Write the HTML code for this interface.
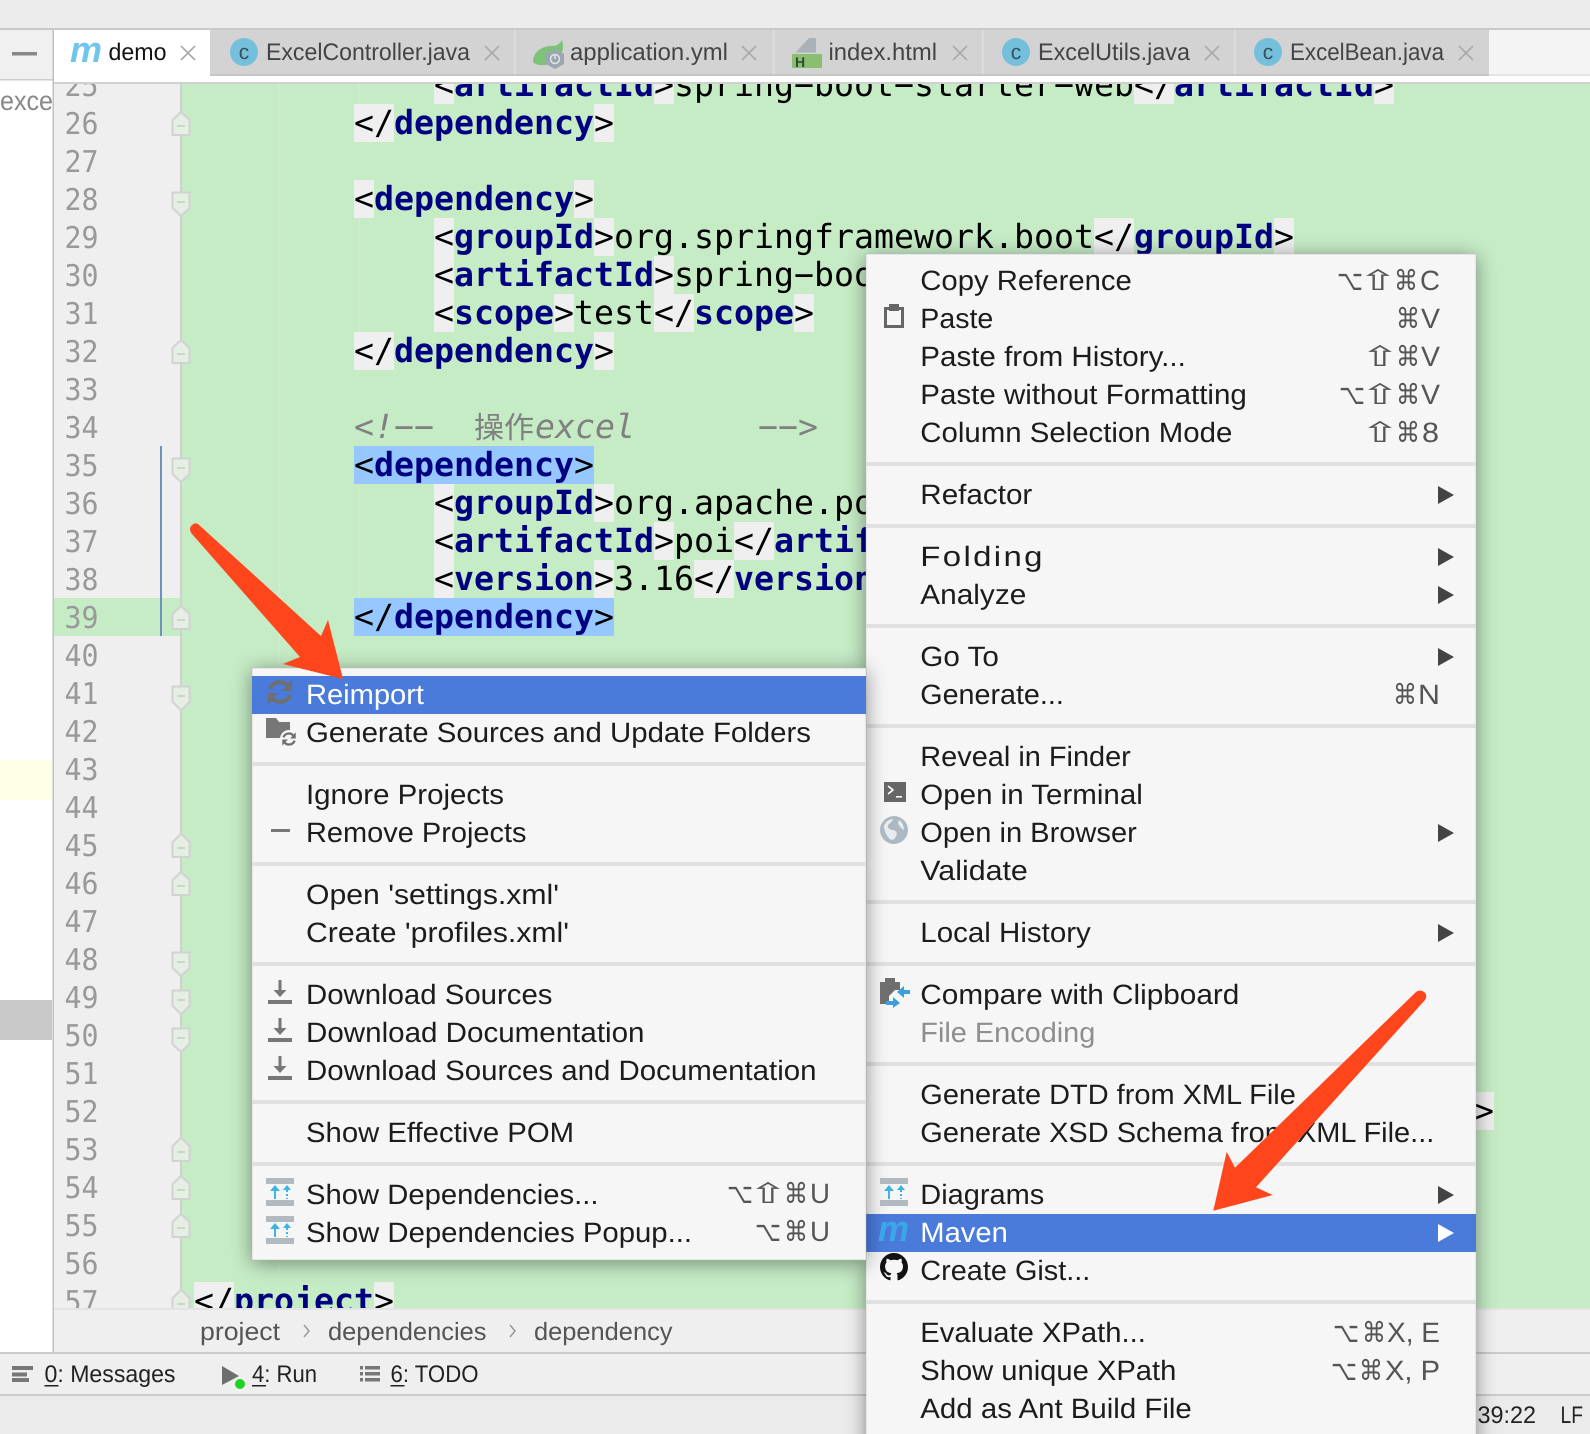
<!DOCTYPE html>
<html><head><meta charset="utf-8"><title>IDE</title>
<style>
html,body{margin:0;padding:0;background:#ececec}
svg{display:block}
text{text-rendering:geometricPrecision;white-space:pre}
.n{font:30px "DejaVu Sans Mono","Liberation Mono",monospace;fill:#999}
.c{font:33.22px "DejaVu Sans Mono","Liberation Mono",monospace;fill:#000}
.t{font-weight:bold;fill:#000080}
.k{font:italic 33.22px "DejaVu Sans Mono","Liberation Mono",monospace;fill:#808080}
.m{font:28px "Liberation Sans","DejaVu Sans",sans-serif;fill:#1c1c1c}
.s{font:28px "Liberation Sans","DejaVu Sans",sans-serif;fill:#555}
.w{fill:#fff}
.tb{font:24px "Liberation Sans",sans-serif;fill:#444}
.bc{font:25px "Liberation Sans",sans-serif;fill:#555}
.st{font:24px "Liberation Sans",sans-serif;fill:#222}
.x{stroke:#aaa;stroke-width:1.6;fill:none}
</style></head>
<body>
<svg xmlns="http://www.w3.org/2000/svg" width="1590" height="1434" viewBox="0 0 1590 1434">
<defs>
<clipPath id="ed"><rect x="54" y="84" width="1536" height="1224"/></clipPath>
<g id="fs"><path d="M172.500 12.500H189.500V28L181 36L172.500 28Z" fill="#e6efe4" stroke="#d2d2d2" stroke-width="2"/><rect x="177" y="21" width="8" height="2" fill="#d2d2d2"/></g>
<g id="fe"><path d="M181 8L189.500 16V31H172.500V16Z" fill="#e6efe4" stroke="#d2d2d2" stroke-width="2"/><rect x="177" y="21" width="8" height="2" fill="#d2d2d2"/></g>
<g id="rf"><path d="M-10-3A10.500 10.500 0 0 1 8-6M10 3A10.500 10.500 0 0 1-8 6" fill="none" stroke="#6f6f6f" stroke-width="4"/><path d="M12-12V-1H2ZM-12 12V1H-2Z" fill="#6f6f6f"/></g>
<g id="dp"><rect width="28" height="6" fill="#b0bac0"/><rect y="22" width="28" height="6" fill="#b0bac0"/><rect x="8" y="12" width="2" height="9" fill="#3cb4e4"/><path d="M9 7L4 13H14Z" fill="#3cb4e4"/><path d="M21 12V21" stroke="#3cb4e4" stroke-width="2" stroke-dasharray="2 2"/><path d="M21 7L17 12H25Z" fill="#3cb4e4"/></g>
<g id="dl"><rect x="-12" y="24" width="24" height="4" fill="#777"/><rect x="-1.500" y="4" width="3" height="11" fill="#777"/><path d="M-6.500 14H6.500L0 21Z" fill="#777"/></g>
</defs>

<!-- chrome -->
<rect width="1590" height="1434" fill="#ececec"/>
<rect y="28" width="1590" height="2" fill="#c9c9c9"/>
<rect x="0" y="30" width="53" height="49" fill="#f0f0f0"/>
<rect x="0" y="79" width="53" height="1.500" fill="#cdcdcd"/>
<rect x="0" y="80.500" width="53" height="1272" fill="#fff"/>
<rect x="12" y="52" width="25" height="3.500" fill="#888"/>
<rect x="0" y="760" width="52" height="40" fill="#ffffe6"/>
<rect x="0" y="1000" width="52" height="40" fill="#c9c9c9"/>
<text x="0" y="110" font-family="Liberation Sans" font-size="27" fill="#888" textLength="53" lengthAdjust="spacingAndGlyphs">exce</text>
<rect x="52.500" y="30" width="2" height="1323" fill="#c0c0c0"/>

<!-- tab strip -->
<rect x="54" y="30" width="1536" height="46" fill="#f4f4f4"/>
<rect x="210" y="30" width="1279" height="44" fill="#d3d3d3"/>
<rect x="210" y="74" width="1279" height="2" fill="#c6c6c6"/>
<rect x="1489" y="74" width="101" height="2" fill="#e4e4e4"/>
<rect x="54" y="30" width="156" height="46" fill="#fff"/>
<rect x="54" y="76" width="1536" height="6" fill="#fff"/>
<rect x="54" y="82" width="1536" height="2" fill="#d0d0d0"/>
<rect x="514" y="30" width="1.500" height="44" fill="#e0e0e0"/>
<rect x="773" y="30" width="1.500" height="44" fill="#e0e0e0"/>
<rect x="982" y="30" width="1.500" height="44" fill="#e0e0e0"/>
<rect x="1234" y="30" width="1.500" height="44" fill="#e0e0e0"/>

<text x="70" y="62" font-family="Liberation Sans" font-size="36" font-weight="bold" font-style="italic" fill="#6ec6ec" textLength="32" lengthAdjust="spacingAndGlyphs">m</text>
<text class="tb" x="108.500" y="60" style="fill:#111" textLength="58" lengthAdjust="spacingAndGlyphs">demo</text>
<path class="x" d="M181 46L195 60M195 46L181 60"/>

<circle cx="244" cy="52" r="14" fill="#73bfdc"/><text x="244" y="59" text-anchor="middle" font-family="Liberation Sans" font-size="21" fill="#3a4f5a">c</text>
<text class="tb" x="266" y="60" textLength="204" lengthAdjust="spacingAndGlyphs">ExcelController.java</text>
<path class="x" d="M485 46L499 60M499 46L485 60"/>

<path d="M533 62C533 50 545 45 555 46C558 45 561 42 562 40C565 50 561 60 552 63C545 66 537 66 533 62Z" fill="#7ec27a"/>
<path d="M555 49L564 54V64L555 69L546 64V54Z" fill="#9aa6b0"/><circle cx="555" cy="59" r="4.500" fill="none" stroke="#e4e4e4" stroke-width="1.500"/><rect x="554.300" y="54" width="1.500" height="5" fill="#e4e4e4"/>
<text class="tb" x="570" y="60" textLength="158" lengthAdjust="spacingAndGlyphs">application.yml</text>
<path class="x" d="M742 46L756 60M756 46L742 60"/>

<path d="M796 52L809 38H816V52.500H796Z" fill="#a9b2b8"/>
<rect x="792" y="54" width="30" height="14" fill="#8abf72"/>
<text x="795" y="67" font-family="Liberation Sans" font-size="14" font-weight="bold" fill="#2f4f2a">H</text>
<text class="tb" x="828.500" y="60" textLength="108.500" lengthAdjust="spacingAndGlyphs">index.html</text>
<path class="x" d="M953 46L967 60M967 46L953 60"/>

<circle cx="1016" cy="52" r="14" fill="#73bfdc"/><text x="1016" y="59" text-anchor="middle" font-family="Liberation Sans" font-size="21" fill="#3a4f5a">c</text>
<text class="tb" x="1038" y="60" textLength="152" lengthAdjust="spacingAndGlyphs">ExcelUtils.java</text>
<path class="x" d="M1205 46L1219 60M1219 46L1205 60"/>

<circle cx="1268" cy="52" r="14" fill="#73bfdc"/><text x="1268" y="59" text-anchor="middle" font-family="Liberation Sans" font-size="21" fill="#3a4f5a">c</text>
<text class="tb" x="1290" y="60" textLength="154" lengthAdjust="spacingAndGlyphs">ExcelBean.java</text>
<path class="x" d="M1459 46L1473 60M1473 46L1459 60"/>

<!-- editor -->
<g clip-path="url(#ed)">
<rect x="54" y="84" width="126" height="1224" fill="#efefef"/>
<rect x="182" y="84" width="1408" height="1224" fill="#c6ecc6"/>
<rect x="54" y="598" width="126" height="38" fill="#c6ecc6"/>
<rect x="180" y="84" width="2" height="1224" fill="#d0d0d0"/>
<rect x="160" y="446" width="2" height="190" fill="#6d92bb"/>
<rect x="278.500" y="84" width="1.500" height="1190" fill="#d8e6d6"/>
<rect x="358.500" y="84" width="1.500" height="20" fill="#d8e6d6"/>
<rect x="358.500" y="218" width="1.500" height="114" fill="#d8e6d6"/>
<rect x="358.500" y="484" width="1.500" height="114" fill="#d8e6d6"/>

<g class="n">
<text x="64.500" y="96" textLength="34" lengthAdjust="spacingAndGlyphs">25</text><text x="64.500" y="134" textLength="34" lengthAdjust="spacingAndGlyphs">26</text><text x="64.500" y="172" textLength="34" lengthAdjust="spacingAndGlyphs">27</text><text x="64.500" y="210" textLength="34" lengthAdjust="spacingAndGlyphs">28</text><text x="64.500" y="248" textLength="34" lengthAdjust="spacingAndGlyphs">29</text><text x="64.500" y="286" textLength="34" lengthAdjust="spacingAndGlyphs">30</text><text x="64.500" y="324" textLength="34" lengthAdjust="spacingAndGlyphs">31</text><text x="64.500" y="362" textLength="34" lengthAdjust="spacingAndGlyphs">32</text><text x="64.500" y="400" textLength="34" lengthAdjust="spacingAndGlyphs">33</text><text x="64.500" y="438" textLength="34" lengthAdjust="spacingAndGlyphs">34</text><text x="64.500" y="476" textLength="34" lengthAdjust="spacingAndGlyphs">35</text><text x="64.500" y="514" textLength="34" lengthAdjust="spacingAndGlyphs">36</text><text x="64.500" y="552" textLength="34" lengthAdjust="spacingAndGlyphs">37</text><text x="64.500" y="590" textLength="34" lengthAdjust="spacingAndGlyphs">38</text><text x="64.500" y="628" textLength="34" lengthAdjust="spacingAndGlyphs">39</text><text x="64.500" y="666" textLength="34" lengthAdjust="spacingAndGlyphs">40</text><text x="64.500" y="704" textLength="34" lengthAdjust="spacingAndGlyphs">41</text><text x="64.500" y="742" textLength="34" lengthAdjust="spacingAndGlyphs">42</text><text x="64.500" y="780" textLength="34" lengthAdjust="spacingAndGlyphs">43</text><text x="64.500" y="818" textLength="34" lengthAdjust="spacingAndGlyphs">44</text><text x="64.500" y="856" textLength="34" lengthAdjust="spacingAndGlyphs">45</text><text x="64.500" y="894" textLength="34" lengthAdjust="spacingAndGlyphs">46</text><text x="64.500" y="932" textLength="34" lengthAdjust="spacingAndGlyphs">47</text><text x="64.500" y="970" textLength="34" lengthAdjust="spacingAndGlyphs">48</text><text x="64.500" y="1008" textLength="34" lengthAdjust="spacingAndGlyphs">49</text><text x="64.500" y="1046" textLength="34" lengthAdjust="spacingAndGlyphs">50</text><text x="64.500" y="1084" textLength="34" lengthAdjust="spacingAndGlyphs">51</text><text x="64.500" y="1122" textLength="34" lengthAdjust="spacingAndGlyphs">52</text><text x="64.500" y="1160" textLength="34" lengthAdjust="spacingAndGlyphs">53</text><text x="64.500" y="1198" textLength="34" lengthAdjust="spacingAndGlyphs">54</text><text x="64.500" y="1236" textLength="34" lengthAdjust="spacingAndGlyphs">55</text><text x="64.500" y="1274" textLength="34" lengthAdjust="spacingAndGlyphs">56</text><text x="64.500" y="1312" textLength="34" lengthAdjust="spacingAndGlyphs">57</text>
</g>

<use href="#fe" y="104"/><use href="#fs" y="180"/><use href="#fe" y="332"/><use href="#fs" y="446"/><use href="#fe" y="598"/><use href="#fs" y="674"/><use href="#fe" y="826"/><use href="#fe" y="864"/><use href="#fs" y="940"/><use href="#fs" y="978"/><use href="#fs" y="1016"/><use href="#fe" y="1130"/><use href="#fe" y="1168"/><use href="#fe" y="1206"/><use href="#fe" y="1282"/>

<g fill="#efefef">
<rect x="434" y="66" width="20" height="38"/><rect x="654" y="66" width="20" height="38"/><rect x="1134" y="66" width="40" height="38"/><rect x="1374" y="66" width="20" height="38"/>
<rect x="354" y="104" width="40" height="38"/><rect x="594" y="104" width="20" height="38"/>
<rect x="354" y="180" width="20" height="38"/><rect x="574" y="180" width="20" height="38"/>
<rect x="434" y="218" width="20" height="38"/><rect x="594" y="218" width="20" height="38"/><rect x="1094" y="218" width="40" height="38"/><rect x="1274" y="218" width="20" height="38"/>
<rect x="434" y="256" width="20" height="38"/><rect x="654" y="256" width="20" height="38"/>
<rect x="434" y="294" width="20" height="38"/><rect x="554" y="294" width="20" height="38"/><rect x="654" y="294" width="40" height="38"/><rect x="794" y="294" width="20" height="38"/>
<rect x="354" y="332" width="40" height="38"/><rect x="594" y="332" width="20" height="38"/>
<rect x="434" y="484" width="20" height="38"/><rect x="594" y="484" width="20" height="38"/>
<rect x="434" y="522" width="20" height="38"/><rect x="654" y="522" width="20" height="38"/><rect x="734" y="522" width="40" height="38"/>
<rect x="434" y="560" width="20" height="38"/><rect x="594" y="560" width="20" height="38"/><rect x="694" y="560" width="40" height="38"/>
<rect x="1474" y="1092" width="20" height="38"/>
<rect x="194" y="1282" width="40" height="38"/><rect x="374" y="1282" width="20" height="38"/>
</g>
<rect x="354" y="446" width="240" height="38" fill="#96c8ff"/>
<rect x="354" y="598" width="260" height="38" fill="#96c8ff"/>

<g transform="translate(0,1)">
<text class="c" x="434" y="95">&lt;<tspan class="t">artifactId</tspan>&gt;spring−boot−starter−web&lt;/<tspan class="t">artifactId</tspan>&gt;</text>
<text class="c" x="354" y="133">&lt;/<tspan class="t">dependency</tspan>&gt;</text>
<text class="c" x="354" y="209">&lt;<tspan class="t">dependency</tspan>&gt;</text>
<text class="c" x="434" y="247">&lt;<tspan class="t">groupId</tspan>&gt;org.springframework.boot&lt;/<tspan class="t">groupId</tspan>&gt;</text>
<text class="c" x="434" y="285">&lt;<tspan class="t">artifactId</tspan>&gt;spring−boot−starter−test</text>
<text class="c" x="434" y="323">&lt;<tspan class="t">scope</tspan>&gt;test&lt;/<tspan class="t">scope</tspan>&gt;</text>
<text class="c" x="354" y="361">&lt;/<tspan class="t">dependency</tspan>&gt;</text>
<text class="k" x="354" y="437">&lt;!−−</text>
<text x="474" y="437" font-family="'Noto Sans CJK SC',sans-serif" font-size="30" fill="#808080">操作</text>
<text class="k" x="535" y="437">excel</text>
<text class="k" x="758" y="437">−−&gt;</text>
<text class="c" x="354" y="475">&lt;<tspan class="t">dependency</tspan>&gt;</text>
<text class="c" x="434" y="513">&lt;<tspan class="t">groupId</tspan>&gt;org.apache.poi</text>
<text class="c" x="434" y="551">&lt;<tspan class="t">artifactId</tspan>&gt;poi&lt;/<tspan class="t">artifactId</tspan>&gt;</text>
<text class="c" x="434" y="589">&lt;<tspan class="t">version</tspan>&gt;3.16&lt;/<tspan class="t">version</tspan>&gt;</text>
<text class="c" x="354" y="627">&lt;/<tspan class="t">dependency</tspan>&gt;</text>
<text class="c" x="1474" y="1121">&gt;</text>
<text class="c" x="194" y="1311">&lt;/<tspan class="t">project</tspan>&gt;</text>
</g>
</g>

<!-- bottom bars -->
<rect x="54" y="1308" width="1536" height="44" fill="#efefef"/>
<rect x="54" y="1308" width="1536" height="2" fill="#e4e4e4"/>
<rect x="0" y="1352" width="1590" height="2" fill="#cbcbcb"/>
<rect x="0" y="1354" width="1590" height="40" fill="#efefef"/>
<rect x="0" y="1394" width="1590" height="2" fill="#cbcbcb"/>
<rect x="0" y="1396" width="1590" height="38" fill="#ebebeb"/>

<text class="bc" x="200" y="1340" textLength="80" lengthAdjust="spacingAndGlyphs">project</text>
<path d="M304 1325L309 1331L304 1337M510 1325L515 1331L510 1337" fill="none" stroke="#999" stroke-width="1.500"/>
<text class="bc" x="328" y="1340" textLength="158.500" lengthAdjust="spacingAndGlyphs">dependencies</text>
<text class="bc" x="534" y="1340" textLength="138.500" lengthAdjust="spacingAndGlyphs">dependency</text>

<rect x="12" y="1366" width="21" height="4" fill="#777"/><rect x="12" y="1372.500" width="15" height="4" fill="#777"/><rect x="12" y="1378" width="17" height="4" fill="#777"/>
<text class="st" x="44.500" y="1382" textLength="131" lengthAdjust="spacingAndGlyphs">0: Messages</text>
<rect x="44.500" y="1385" width="14" height="1.500" fill="#222"/>
<path d="M222 1366L239 1376L222 1385Z" fill="#6e6e6e"/><circle cx="240" cy="1384" r="5" fill="#1fd31f"/>
<text class="st" x="252" y="1382" textLength="65" lengthAdjust="spacingAndGlyphs">4: Run</text>
<rect x="252" y="1385" width="14" height="1.500" fill="#222"/>
<g fill="#777"><rect x="360" y="1366" width="3" height="3.500"/><rect x="365" y="1366" width="15" height="3.500"/><rect x="360" y="1372" width="3" height="3.500"/><rect x="365" y="1372" width="15" height="3.500"/><rect x="360" y="1378" width="3" height="3.500"/><rect x="365" y="1378" width="15" height="3.500"/></g>
<text class="st" x="390.500" y="1382" textLength="88" lengthAdjust="spacingAndGlyphs">6: TODO</text>
<rect x="390.500" y="1385" width="14" height="1.500" fill="#222"/>
<text class="st" x="1477.500" y="1423" textLength="58.500" lengthAdjust="spacingAndGlyphs">39:22</text>
<text class="st" x="1560.500" y="1423" textLength="22.500" lengthAdjust="spacingAndGlyphs">LF</text>

<!-- right menu -->
<rect x="866" y="254" width="610" height="1200" fill="#f6f6f6" stroke="#b8b8b8" stroke-width="0.500" style="filter:drop-shadow(0 3px 10px rgba(0,0,0,.42))"/>
<g fill="#e0e0e0">
<rect x="866" y="462" width="610" height="4"/><rect x="866" y="524" width="610" height="4"/><rect x="866" y="624" width="610" height="4"/><rect x="866" y="724" width="610" height="4"/><rect x="866" y="900" width="610" height="4"/><rect x="866" y="962" width="610" height="4"/><rect x="866" y="1062" width="610" height="4"/><rect x="866" y="1162" width="610" height="4"/><rect x="866" y="1300" width="610" height="4"/>
</g>
<rect x="866" y="1214" width="610" height="38" fill="#4a7bdb"/>

<!-- left menu -->
<rect x="252" y="668" width="614" height="592" fill="#f6f6f6" stroke="#b8b8b8" stroke-width="0.500" style="filter:drop-shadow(0 3px 10px rgba(0,0,0,.42))"/>
<g fill="#e0e0e0">
<rect x="252" y="762" width="614" height="4"/><rect x="252" y="862" width="614" height="4"/><rect x="252" y="962" width="614" height="4"/><rect x="252" y="1100" width="614" height="4"/><rect x="252" y="1162" width="614" height="4"/>
</g>
<rect x="252" y="676" width="614" height="38" fill="#4a7bdb"/>

<!-- left menu text -->
<g transform="translate(0,1)">
<text class="m w" x="306" y="703" textLength="118" lengthAdjust="spacingAndGlyphs">Reimport</text>
<text class="m" x="306" y="741" textLength="505" lengthAdjust="spacingAndGlyphs">Generate Sources and Update Folders</text>
<text class="m" x="306" y="803" textLength="198" lengthAdjust="spacingAndGlyphs">Ignore Projects</text>
<text class="m" x="306" y="841" textLength="220.500" lengthAdjust="spacingAndGlyphs">Remove Projects</text>
<text class="m" x="306" y="903" textLength="253" lengthAdjust="spacingAndGlyphs">Open 'settings.xml'</text>
<text class="m" x="306" y="941" textLength="263" lengthAdjust="spacingAndGlyphs">Create 'profiles.xml'</text>
<text class="m" x="306" y="1003" textLength="246.500" lengthAdjust="spacingAndGlyphs">Download Sources</text>
<text class="m" x="306" y="1041" textLength="338.500" lengthAdjust="spacingAndGlyphs">Download Documentation</text>
<text class="m" x="306" y="1079" textLength="510.500" lengthAdjust="spacingAndGlyphs">Download Sources and Documentation</text>
<text class="m" x="306" y="1141" textLength="268" lengthAdjust="spacingAndGlyphs">Show Effective POM</text>
<text class="m" x="306" y="1203" textLength="292.500" lengthAdjust="spacingAndGlyphs">Show Dependencies...</text>
<text class="m" x="306" y="1241" textLength="386" lengthAdjust="spacingAndGlyphs">Show Dependencies Popup...</text>
</g>
<!-- left shortcuts -->
<text class="s" x="727" y="1203" textLength="26" lengthAdjust="spacingAndGlyphs">⌥</text><text class="s" x="748" y="1203" textLength="40" lengthAdjust="spacingAndGlyphs">⇧</text><text class="s" x="784" y="1203" textLength="24" lengthAdjust="spacingAndGlyphs">⌘</text><text class="s" x="810" y="1203" textLength="20" lengthAdjust="spacingAndGlyphs">U</text>
<text class="s" x="755" y="1241" textLength="26" lengthAdjust="spacingAndGlyphs">⌥</text><text class="s" x="784" y="1241" textLength="24" lengthAdjust="spacingAndGlyphs">⌘</text><text class="s" x="810" y="1241" textLength="20" lengthAdjust="spacingAndGlyphs">U</text>

<!-- left menu icons -->
<g transform="translate(280,692)"><use href="#rf"/></g>
<path d="M266 718H276L279 722H290V738H266Z" fill="#777"/><circle cx="289" cy="739" r="9" fill="#f6f6f6"/><g transform="translate(289,739) scale(.56)"><use href="#rf"/></g>
<rect x="271" y="829" width="19" height="3" fill="#777"/>
<g transform="translate(280,976)"><use href="#dl"/></g><g transform="translate(280,1014)"><use href="#dl"/></g><g transform="translate(280,1052)"><use href="#dl"/></g>
<g transform="translate(266,1178)"><use href="#dp"/></g><g transform="translate(266,1216)"><use href="#dp"/></g>

<!-- right menu text -->
<g transform="translate(-0.700,1)">
<text class="m" x="921" y="289" textLength="211.500" lengthAdjust="spacingAndGlyphs">Copy Reference</text>
<text class="m" x="921" y="327" textLength="73" lengthAdjust="spacingAndGlyphs">Paste</text>
<text class="m" x="921" y="365" textLength="265.500" lengthAdjust="spacingAndGlyphs">Paste from History...</text>
<text class="m" x="921" y="403" textLength="326.500" lengthAdjust="spacingAndGlyphs">Paste without Formatting</text>
<text class="m" x="921" y="441" textLength="312" lengthAdjust="spacingAndGlyphs">Column Selection Mode</text>
<text class="m" x="921" y="503" textLength="112" lengthAdjust="spacingAndGlyphs">Refactor</text>
<text class="m" x="921" y="565" style="letter-spacing:2px" textLength="124.500" lengthAdjust="spacingAndGlyphs">Folding</text>
<text class="m" x="921" y="603" textLength="106" lengthAdjust="spacingAndGlyphs">Analyze</text>
<text class="m" x="921" y="665" textLength="78.500" lengthAdjust="spacingAndGlyphs">Go To</text>
<text class="m" x="921" y="703" textLength="143.500" lengthAdjust="spacingAndGlyphs">Generate...</text>
<text class="m" x="921" y="765" textLength="210.500" lengthAdjust="spacingAndGlyphs">Reveal in Finder</text>
<text class="m" x="921" y="803" textLength="222.500" lengthAdjust="spacingAndGlyphs">Open in Terminal</text>
<text class="m" x="921" y="841" textLength="216.500" lengthAdjust="spacingAndGlyphs">Open in Browser</text>
<text class="m" x="921" y="879" textLength="107.500" lengthAdjust="spacingAndGlyphs">Validate</text>
<text class="m" x="921" y="941" textLength="170.500" lengthAdjust="spacingAndGlyphs">Local History</text>
<text class="m" x="921" y="1003" textLength="319" lengthAdjust="spacingAndGlyphs">Compare with Clipboard</text>
<text class="m" x="921" y="1041" style="fill:#8e8e8e" textLength="175" lengthAdjust="spacingAndGlyphs">File Encoding</text>
<text class="m" x="921" y="1103" textLength="375.500" lengthAdjust="spacingAndGlyphs">Generate DTD from XML File</text>
<text class="m" x="921" y="1141" textLength="514" lengthAdjust="spacingAndGlyphs">Generate XSD Schema from XML File...</text>
<text class="m" x="921" y="1203" textLength="124" lengthAdjust="spacingAndGlyphs">Diagrams</text>
<text class="m w" x="921" y="1241" textLength="87.500" lengthAdjust="spacingAndGlyphs">Maven</text>
<text class="m" x="921" y="1279" textLength="170" lengthAdjust="spacingAndGlyphs">Create Gist...</text>
<text class="m" x="921" y="1341" textLength="225.500" lengthAdjust="spacingAndGlyphs">Evaluate XPath...</text>
<text class="m" x="921" y="1379" textLength="256" lengthAdjust="spacingAndGlyphs">Show unique XPath</text>
<text class="m" x="921" y="1417" textLength="271.500" lengthAdjust="spacingAndGlyphs">Add as Ant Build File</text>
</g>

<!-- right shortcuts -->
<text class="s" x="1337" y="290" textLength="26" lengthAdjust="spacingAndGlyphs">⌥</text><text class="s" x="1358" y="290" textLength="40" lengthAdjust="spacingAndGlyphs">⇧</text><text class="s" x="1394" y="290" textLength="24" lengthAdjust="spacingAndGlyphs">⌘</text><text class="s" x="1420" y="290" textLength="20" lengthAdjust="spacingAndGlyphs">C</text>
<text class="s" x="1396" y="328" textLength="24" lengthAdjust="spacingAndGlyphs">⌘</text><text class="s" x="1421" y="328" textLength="19" lengthAdjust="spacingAndGlyphs">V</text>
<text class="s" x="1360" y="366" textLength="40" lengthAdjust="spacingAndGlyphs">⇧</text><text class="s" x="1396" y="366" textLength="24" lengthAdjust="spacingAndGlyphs">⌘</text><text class="s" x="1421" y="366" textLength="19" lengthAdjust="spacingAndGlyphs">V</text>
<text class="s" x="1339" y="404" textLength="26" lengthAdjust="spacingAndGlyphs">⌥</text><text class="s" x="1360" y="404" textLength="40" lengthAdjust="spacingAndGlyphs">⇧</text><text class="s" x="1396" y="404" textLength="24" lengthAdjust="spacingAndGlyphs">⌘</text><text class="s" x="1421" y="404" textLength="19" lengthAdjust="spacingAndGlyphs">V</text>
<text class="s" x="1360" y="442" textLength="40" lengthAdjust="spacingAndGlyphs">⇧</text><text class="s" x="1396" y="442" textLength="24" lengthAdjust="spacingAndGlyphs">⌘</text><text class="s" x="1422" y="442" textLength="17" lengthAdjust="spacingAndGlyphs">8</text>
<text class="s" x="1393" y="704" textLength="24" lengthAdjust="spacingAndGlyphs">⌘</text><text class="s" x="1418" y="704" textLength="22" lengthAdjust="spacingAndGlyphs">N</text>
<text class="s" x="1333" y="1342" textLength="26" lengthAdjust="spacingAndGlyphs">⌥</text><text class="s" x="1362" y="1342" textLength="24" lengthAdjust="spacingAndGlyphs">⌘</text><text class="s" x="1387" y="1342" textLength="53" lengthAdjust="spacingAndGlyphs">X, E</text>
<text class="s" x="1331" y="1380" textLength="26" lengthAdjust="spacingAndGlyphs">⌥</text><text class="s" x="1359" y="1380" textLength="24" lengthAdjust="spacingAndGlyphs">⌘</text><text class="s" x="1385" y="1380" textLength="55" lengthAdjust="spacingAndGlyphs">X, P</text>

<!-- submenu triangles -->
<g fill="#444">
<path d="M1438 486L1454 495L1438 504Z"/><path d="M1438 548L1454 557L1438 566Z"/><path d="M1438 586L1454 595L1438 604Z"/><path d="M1438 648L1454 657L1438 666Z"/><path d="M1438 824L1454 833L1438 842Z"/><path d="M1438 924L1454 933L1438 942Z"/><path d="M1438 1186L1454 1195L1438 1204Z"/>
</g>
<path d="M1438 1224L1454 1233L1438 1242Z" fill="#fff"/>

<!-- right menu icons -->
<rect x="885.500" y="308.500" width="17" height="18" fill="#f6f6f6" stroke="#666" stroke-width="3"/>
<rect x="889" y="304" width="10" height="7" fill="#666"/>
<rect x="884" y="782" width="22" height="20" fill="#666"/>
<path d="M888 786L893 790L888 794" fill="none" stroke="#fff" stroke-width="1.600"/><rect x="896" y="796" width="6" height="1.600" fill="#fff"/>
<circle cx="894" cy="830" r="14" fill="#adb9c2"/>
<path d="M884 826C886 821 890 819 893 819C892 822 890 823 888 825C887 828 890 830 893 830C897 831 898 834 895 838C893 841 890 840 888 837C886 834 884 830 884 826ZM899 820C902 822 904 826 904 830C902 829 899 826 898 823Z" fill="#e8ecef"/>
<path d="M880 982H885V978H895V982H900V990H895L889 996V1004H880Z" fill="#6e6e6e"/>
<path d="M897 992L904 986V990H910V994H904V998Z" fill="#3a9fe0"/>
<path d="M900 1003L893 997V1001H886V1005H893V1008Z" fill="#3a9fe0"/>
<g transform="translate(880,1178)"><use href="#dp"/></g>
<text x="878" y="1241" font-family="Liberation Sans" font-size="36" font-weight="bold" font-style="italic" fill="#3ba7e8" textLength="31" lengthAdjust="spacingAndGlyphs">m</text>
<path transform="translate(880,1253) scale(1.750)" fill="#111" d="M8 0C3.58 0 0 3.58 0 8c0 3.54 2.29 6.53 5.47 7.59.4.07.55-.17.55-.38 0-.19-.01-.82-.01-1.49-2.01.37-2.53-.49-2.69-.94-.09-.23-.48-.94-.82-1.13-.28-.15-.68-.52-.01-.53.63-.01 1.08.58 1.23.82.72 1.21 1.87.87 2.33.66.07-.52.28-.87.51-1.07-1.78-.2-3.64-.89-3.64-3.95 0-.87.31-1.59.82-2.15-.08-.2-.36-1.02.08-2.12 0 0 .67-.21 2.2.82.64-.18 1.32-.27 2-.27.68 0 1.36.09 2 .27 1.53-1.04 2.2-.82 2.2-.82.44 1.1.16 1.92.08 2.12.51.56.82 1.27.82 2.15 0 3.07-1.87 3.75-3.65 3.95.29.25.54.73.54 1.48 0 1.07-.01 1.93-.01 2.2 0 .21.15.46.55.38A8.013 8.013 0 0016 8c0-4.42-3.58-8-8-8z"/>

<!-- red arrows -->
<path fill="#ff451b" d="M198 524L321 636L328 620L343 679L283 664L300 657L192 534Q188 529 192 525Q195 522 198 524Z"/>
<path fill="#ff451b" d="M1416 992L1235 1167.700L1226.700 1151.700L1213.300 1210.700L1272.700 1195L1256 1187.300L1425 1000Q1428 995 1424 992Q1420 989 1416 992Z"/>
</svg>
</body></html>
